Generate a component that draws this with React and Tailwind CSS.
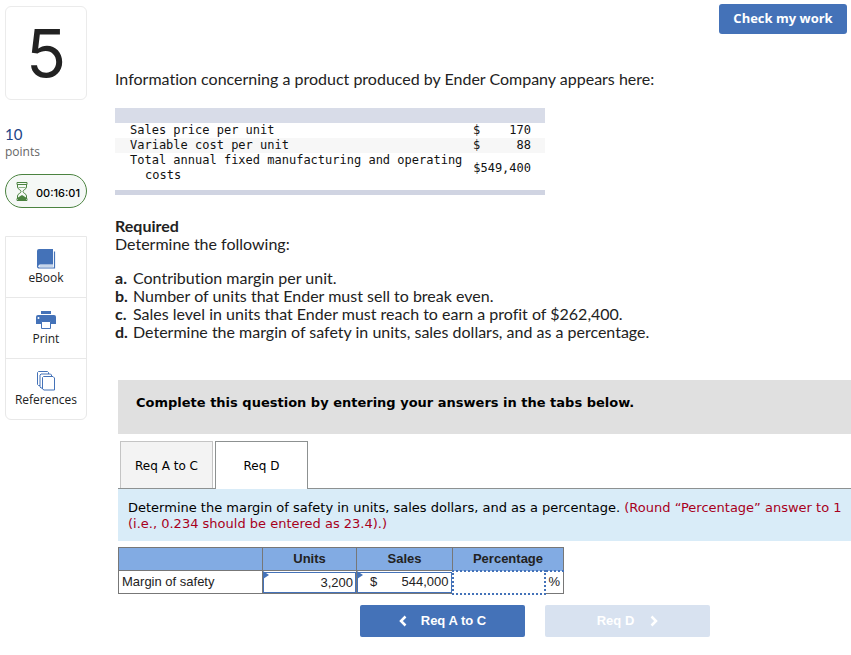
import React, { useState } from 'react';

const requirements = [
  { key: 'a', text: 'Contribution margin per unit.' },
  { key: 'b', text: 'Number of units that Ender must sell to break even.' },
  { key: 'c', text: 'Sales level in units that Ender must reach to earn a profit of $262,400.' },
  { key: 'd', text: 'Determine the margin of safety in units, sales dollars, and as a percentage.' },
];

function BookIcon() {
  return (
    <svg width="20" height="22" viewBox="0 0 20 22" aria-hidden="true">
      <path d="M3 1h14v15H4.500a2 2 0 0 0-2 1.500L1 19V3a2 2 0 0 1 2-2z" fill="#4472b8" />
      <path d="M17 16H3.500a2 2 0 0 0 0 4h15V3.500" fill="none" stroke="#4472b8" strokeWidth="1.200" />
      <path d="M1.600 3v15" stroke="#4472b8" strokeWidth="1.200" />
      <path d="M3.500 18H17" stroke="#8fadd6" />
    </svg>
  );
}

function PrinterIcon() {
  return (
    <svg width="20" height="20" viewBox="0 0 20 20" aria-hidden="true">
      <path d="M5 0h10v3H5z" fill="#4472b8" />
      <path d="M2 4h16a2 2 0 0 1 2 2v7H0V6a2 2 0 0 1 2-2z" fill="#4472b8" />
      <path d="M5.500 10.500h9v7h-9z" fill="#fff" stroke="#4472b8" />
      <circle cx="2.500" cy="7" r="1" fill="#fff" />
    </svg>
  );
}

function PagesIcon() {
  return (
    <svg width="18" height="21" viewBox="0 0 18 21" aria-hidden="true" fill="#fff" stroke="#4472b8">
      <path d="M1.500.500h9l1 1v13h-10l-1-1v-12z" />
      <path d="M4 3h9.500l1 1v13H4l-1-1V4z" />
      <path d="M6.500 5.500h9.500l1.500 1.500v12H7l-1.500-1V6.500z" />
    </svg>
  );
}

function HourglassIcon() {
  return (
    <svg width="12" height="19" viewBox="0 0 12 19" aria-hidden="true" fill="none" stroke="#4b8340">
      <path d="M1 .500h10v2H1zM1 16.500h10v2H1z" />
      <path d="M1.500 2.500v2.500c0 2.500 3.500 2.500 3.500 4.500s-3.500 2-3.500 4.500v2.500M10.500 2.500v2.500c0 2.500-3.500 2.500-3.500 4.500s3.500 2 3.500 4.500v2.500" />
      <path d="M2.500 5.500h7" strokeOpacity=".6" />
      <path d="M2 18v-2.500l4-2.500 4 2.500v2.500z" fill="#4b8340" stroke="none" />
    </svg>
  );
}

function Chevron({ direction }) {
  return (
    <svg width="8" height="12" viewBox="0 0 8 12" aria-hidden="true" fill="none" stroke="currentColor" strokeWidth="2.500">
      <path d={direction === 'left' ? 'M6.500 1.500L2 6l4.500 4.500' : 'M1.500 1.500L6 6l-4.500 4.500'} />
    </svg>
  );
}

const tools = [
  { label: 'eBook', Icon: BookIcon },
  { label: 'Print', Icon: PrinterIcon },
  { label: 'References', Icon: PagesIcon },
];

function Sidebar() {
  return (
    <aside className="w-[82px] shrink-0 pt-[6px]">
      <div className="flex h-[94px] items-center justify-center rounded-md border border-[#ebebeb] font-['Inter',sans-serif] text-[66px] leading-none text-[#222]">
        5
      </div>
      <div className="mt-[26px]">
        <p className="font-['Lato',sans-serif] text-[15px] leading-4 text-[#1c4587]">10</p>
        <p className="mt-[2px] font-['Open_Sans',sans-serif] text-xs leading-4 text-[#666]">points</p>
      </div>
      <div className="mt-[14px] flex h-[34px] items-center justify-end gap-2 rounded-full border border-[#4b8340] bg-[#f5f8f6] pr-[6px]">
        <HourglassIcon />
        <span className="pt-[3px] font-['Inter',sans-serif] text-[11px] leading-4 font-medium text-black">00:16:01</span>
      </div>
      <div className="mt-[28px] rounded-b-md border border-[#e8e8e8]">
        {tools.map(({ label, Icon }) => (
          <button
            key={label}
            className="flex h-[61px] w-full flex-col items-center justify-end border-b border-[#e8e8e8] pb-[11px] font-['Open_Sans',sans-serif] text-xs leading-4 text-[#222] last:h-[60px] last:border-b-0"
          >
            <Icon />
            {label}
          </button>
        ))}
      </div>
    </aside>
  );
}

function CostTable() {
  return (
    <table className="mt-5 w-full max-w-[430px] table-fixed border-b-5 border-[#d0d4e2] font-['DejaVu_Sans_Mono',monospace] text-xs leading-[15px] text-[#111]">
      <thead>
        <tr className="h-[15px] bg-[#d8dce8]">
          <th scope="col" aria-label="Item" />
          <th scope="col" aria-label="Amount" className="w-[80px]" />
        </tr>
      </thead>
      <tbody>
        <tr>
          <td className="p-0 pl-[15px]">Sales price per unit</td>
          <td className="p-0 pr-[14px]">
            <div className="flex justify-between pl-2"><span>$</span><span>170</span></div>
          </td>
        </tr>
        <tr className="bg-[#f7f7f7]">
          <td className="p-0 pl-[15px]">Variable cost per unit</td>
          <td className="p-0 pr-[14px]">
            <div className="flex justify-between pl-2"><span>$</span><span>88</span></div>
          </td>
        </tr>
        <tr>
          <td className="p-0 pb-[7px] pl-[30px] -indent-[15px]">
            Total annual fixed manufacturing and operating costs
          </td>
          <td className="p-0 pr-[14px] pb-[7px] text-right">$549,400</td>
        </tr>
      </tbody>
    </table>
  );
}

function Marker() {
  return <span className="absolute top-0 left-0 size-0 border-y-4 border-l-6 border-y-transparent border-l-[#4472b8]" />;
}

function AnswerTable() {
  const [units, setUnits] = useState('3,200');
  const [sales, setSales] = useState('544,000');
  const [percentage, setPercentage] = useState('');

  return (
    <table className="mt-[6px] w-[446px] table-fixed border-collapse text-[13px] leading-4 text-[#222]">
      <colgroup>
        <col className="w-[144px]" />
        <col className="w-[94px]" />
        <col className="w-[96px]" />
        <col className="w-[92px]" />
        <col />
      </colgroup>
      <thead>
        <tr className="h-[23px] bg-[#82abe3]">
          <th scope="col" aria-label="Measure" className="border border-[#777] p-0" />
          <th scope="col" className="border border-[#777] p-0">Units</th>
          <th scope="col" className="border border-[#777] p-0">Sales</th>
          <th scope="col" colSpan={2} className="border border-[#777] p-0">Percentage</th>
        </tr>
      </thead>
      <tbody>
        <tr className="h-[23px]">
          <th scope="row" className="border border-[#777] p-0 pl-[3px] text-left font-normal">Margin of safety</th>
          <td className="relative border border-[#777] p-0">
            <Marker />
            <input
              aria-label="Units"
              value={units}
              onChange={(e) => setUnits(e.target.value)}
              className="block h-[21px] w-full border border-[#4472b8] pr-[2px] text-right outline-none"
            />
          </td>
          <td className="relative border border-[#777] p-0">
            <Marker />
            <div className="flex h-[21px] items-center border border-[#4472b8] pl-3">
              <span>$</span>
              <input
                aria-label="Sales"
                value={sales}
                onChange={(e) => setSales(e.target.value)}
                className="w-full min-w-0 pr-[2px] text-right outline-none"
              />
            </div>
          </td>
          <td className="border-2 border-dotted border-[#4472b8] p-0">
            <input
              aria-label="Percentage"
              value={percentage}
              onChange={(e) => setPercentage(e.target.value)}
              className="block h-[19px] w-full text-right outline-none"
            />
          </td>
          <td className="border border-t-2 border-[#777] border-t-[#4472b8] p-0 text-center [border-top-style:dotted]">%</td>
        </tr>
      </tbody>
    </table>
  );
}

export default function App() {
  const [tab, setTab] = useState('d');
  const tabClass = (active) =>
    active
      ? 'relative z-10 -mb-px h-12 w-[93px] border border-b-0 border-[#8d9191] bg-white'
      : 'h-[47px] w-[93px] border border-b-0 border-[#c4c4c4] bg-[#f3f3f3] pt-[2px]';

  return (
    <div className="flex min-h-screen gap-[28px] overflow-hidden bg-white pl-[5px] font-['Liberation_Sans',Arial,sans-serif]">
      <Sidebar />

      <main className="min-w-0 flex-1 pb-4">
        <div className="flex justify-end pt-1 pr-1">
          <button className="h-[30px] w-32 rounded-[3px] bg-[#4472b8] pb-[2px] font-['Open_Sans',sans-serif] text-[13px] leading-4 font-bold text-white">
            Check my work
          </button>
        </div>

        <section className="mt-[36px] font-['Lato',sans-serif] text-base leading-[18px] text-[#222] [font-variant-ligatures:none]">
          <p>Information concerning a product produced by Ender Company appears here:</p>
          <CostTable />
          <h2 className="mt-[22px] font-bold">Required</h2>
          <p>Determine the following:</p>
          <ul className="mt-4">
            {requirements.map((item) => (
              <li key={item.key} className="flex">
                <b className="w-[18px] shrink-0">{item.key}.</b>
                <span>{item.text}</span>
              </li>
            ))}
          </ul>
        </section>

        <section className="mt-[39px] ml-[3px]">
          <div className="h-[54px] bg-[#e0e0e0] px-[18px] pt-[15px] font-['DejaVu_Sans',Verdana,sans-serif] text-[13px] leading-4 font-bold text-black">
            Complete this question by entering your answers in the tabs below.
          </div>

          <div className="mt-[7px] flex items-end gap-[2px] border-b border-[#8d9191] pl-[2px] font-['DejaVu_Sans',Verdana,sans-serif] text-xs leading-4 text-black" role="tablist">
            <button role="tab" aria-selected={tab === 'ac'} onClick={() => setTab('ac')} className={tabClass(tab === 'ac')}>
              Req A to C
            </button>
            <button role="tab" aria-selected={tab === 'd'} onClick={() => setTab('d')} className={tabClass(tab === 'd')}>
              Req D
            </button>
          </div>

          <p className="overflow-hidden bg-[#d9ecf8] pt-[11px] pb-[9px] pl-[10px] font-['DejaVu_Sans',Verdana,sans-serif] text-[13px] leading-4 whitespace-nowrap text-black">
            Determine the margin of safety in units, sales dollars, and as a percentage.{' '}
            <span className="text-[#a8001c]">
              (Round “Percentage” answer to 1<br />
              (i.e., 0.234 should be entered as 23.4).)
            </span>
          </p>

          <AnswerTable />

          <div className="mt-[10px] flex gap-5 pl-[242px] text-[13px] leading-4 font-bold text-white">
            <button className="flex h-8 w-[165px] items-center justify-center gap-[14px] rounded-[2px] bg-[#4472b8]">
              <Chevron direction="left" />
              Req A to C
            </button>
            <button disabled className="flex h-8 w-[165px] items-center justify-center gap-4 rounded-[2px] bg-[#d8e2f0]">
              Req D
              <Chevron direction="right" />
            </button>
          </div>
        </section>
      </main>
    </div>
  );
}
